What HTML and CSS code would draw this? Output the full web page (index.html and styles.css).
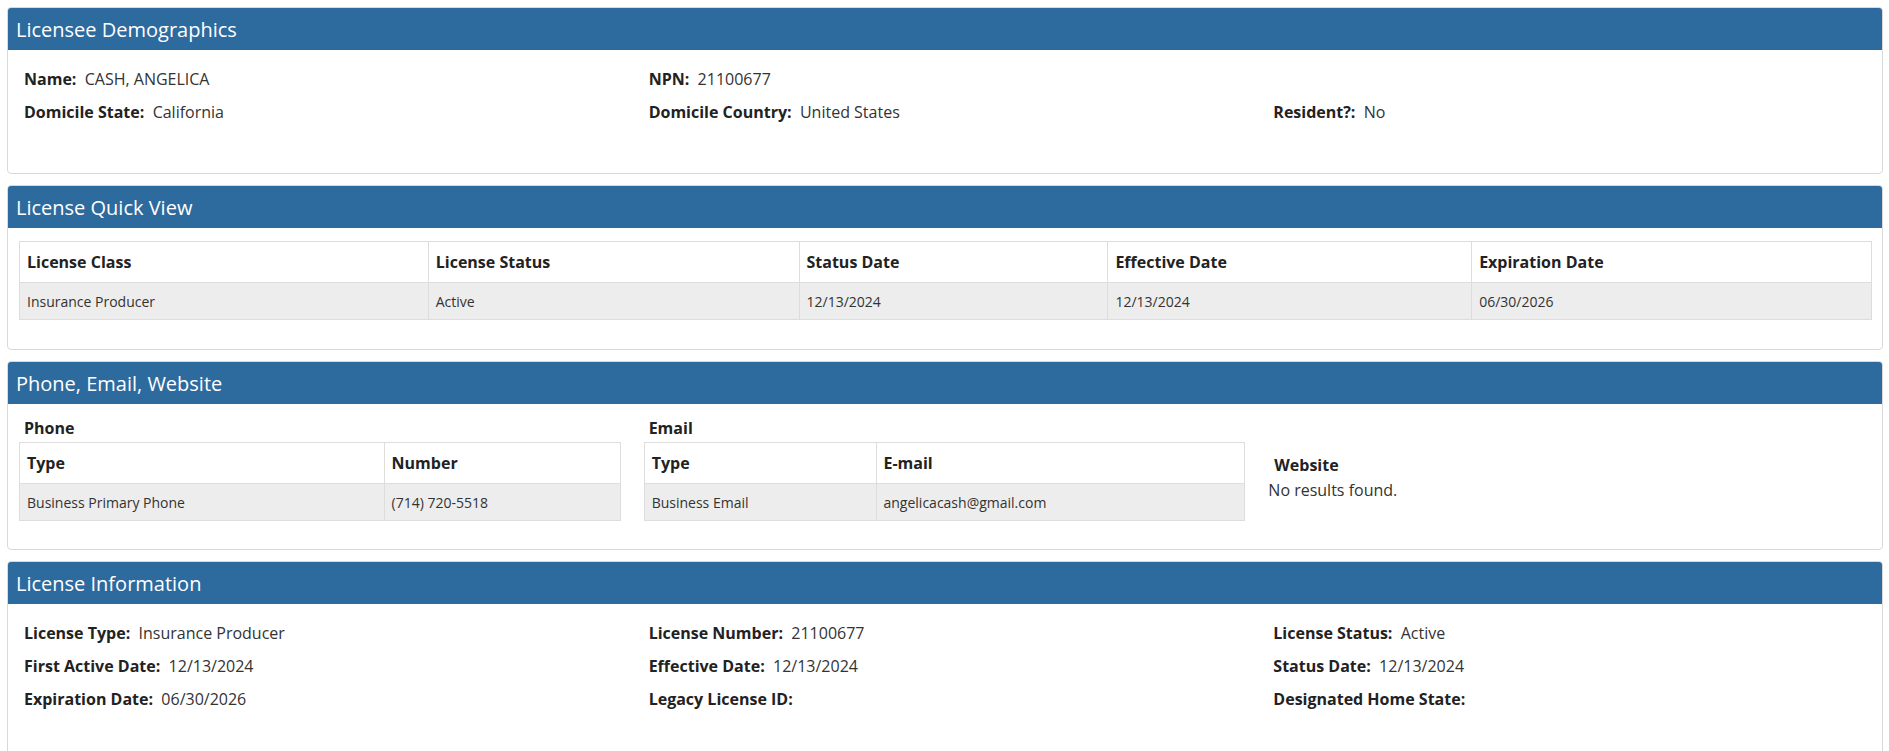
FILE: index.html
```html
<!DOCTYPE html>
<html lang="en">
<head>
<meta charset="utf-8">
<title>Licensee Details</title>
<link rel="stylesheet" href="styles.css">
</head>
<body>
<div class="page">

  <section class="panel">
    <div class="panel-heading">Licensee Demographics</div>
    <div class="panel-body fields demo">
      <div class="field"><b>Name:</b>&nbsp; CASH, ANGELICA</div>
      <div class="field"><b>NPN:</b>&nbsp; 21100677</div>
      <div class="field"></div>
      <div class="field"><b>Domicile State:</b>&nbsp; California</div>
      <div class="field"><b>Domicile Country:</b>&nbsp; United States</div>
      <div class="field"><b>Resident?:</b>&nbsp; No</div>
    </div>
  </section>

  <section class="panel">
    <div class="panel-heading">License Quick View</div>
    <div class="panel-body quick">
      <table class="grid-table">
        <colgroup>
          <col class="qc1"><col class="qc2"><col class="qc3"><col class="qc4"><col class="qc5">
        </colgroup>
        <thead>
          <tr><th>License Class</th><th>License Status</th><th>Status Date</th><th>Effective Date</th><th>Expiration Date</th></tr>
        </thead>
        <tbody>
          <tr><td>Insurance Producer</td><td>Active</td><td>12/13/2024</td><td>12/13/2024</td><td>06/30/2026</td></tr>
        </tbody>
      </table>
    </div>
  </section>

  <section class="panel">
    <div class="panel-heading">Phone, Email, Website</div>
    <div class="panel-body contact">
      <div class="contact-col">
        <div class="sub-label">Phone</div>
        <table class="grid-table">
          <colgroup><col class="pc1"><col class="pc2"></colgroup>
          <thead><tr><th>Type</th><th>Number</th></tr></thead>
          <tbody><tr><td>Business Primary Phone</td><td>(714) 720-5518</td></tr></tbody>
        </table>
      </div>
      <div class="contact-col">
        <div class="sub-label">Email</div>
        <table class="grid-table">
          <colgroup><col class="ec1"><col class="ec2"></colgroup>
          <thead><tr><th>Type</th><th>E-mail</th></tr></thead>
          <tbody><tr><td>Business Email</td><td>angelicacash@gmail.com</td></tr></tbody>
        </table>
      </div>
      <div class="contact-col website">
        <div class="sub-label">Website</div>
        <div class="no-results">No results found.</div>
      </div>
    </div>
  </section>

  <section class="panel">
    <div class="panel-heading">License Information</div>
    <div class="panel-body fields info">
      <div class="field"><b>License Type:</b>&nbsp; Insurance Producer</div>
      <div class="field"><b>License Number:</b>&nbsp; 21100677</div>
      <div class="field"><b>License Status:</b>&nbsp; Active</div>
      <div class="field"><b>First Active Date:</b>&nbsp; 12/13/2024</div>
      <div class="field"><b>Effective Date:</b>&nbsp; 12/13/2024</div>
      <div class="field"><b>Status Date:</b>&nbsp; 12/13/2024</div>
      <div class="field"><b>Expiration Date:</b>&nbsp; 06/30/2026</div>
      <div class="field"><b>Legacy License ID:</b></div>
      <div class="field"><b>Designated Home State:</b></div>
    </div>
  </section>

</div>
</body>
</html>
```
FILE: styles.css
```css
* { box-sizing: border-box; }

html, body {
  margin: 0;
  padding: 0;
  background: #ffffff;
}

body {
  font-family: "Open Sans", "Liberation Sans", sans-serif;
  font-size: 16px;
  color: #333333;
}

.page {
  padding: 7px 6px 0 7px;
}

.panel {
  border: 1px solid #d9d9d9;
  border-radius: 4px;
  background: #ffffff;
  margin-bottom: 11px;
  overflow: hidden;
}

.panel-heading {
  height: 42px;
  background: #2d6a9e;
  color: #ffffff;
  font-size: 20px;
  display: flex;
  align-items: center;
  padding: 0 8px;
}

/* field grids */
.fields {
  display: grid;
  grid-template-columns: repeat(3, 1fr);
  grid-auto-rows: 33px;
  padding-top: 18px;
}

.demo { padding-bottom: 39px; }
.info { padding-bottom: 40px; }

.field {
  padding: 0 16px;
  line-height: 22px;
  color: #333333;
  white-space: nowrap;
}

.field b {
  font-weight: 700;
  color: #222222;
}

/* tables */
.quick {
  padding: 13px 10px 29px 11px;
}

.grid-table {
  width: 100%;
  border-collapse: collapse;
  table-layout: fixed;
}

.grid-table th,
.grid-table td {
  border: 1px solid #dddddd;
  text-align: left;
  padding: 0 7px;
  white-space: nowrap;
}

.grid-table th {
  height: 41px;
  font-size: 16px;
  font-weight: 700;
  color: #222222;
  background: #ffffff;
}

.grid-table td {
  height: 37px;
  font-size: 14px;
  color: #333333;
  background: #ecedec;
}

.qc1 { width: 22.07%; }
.qc2 { width: 20.02%; }
.qc3 { width: 16.68%; }
.qc4 { width: 19.64%; }
.qc5 { width: 21.59%; }

.pc1 { width: 60.7%; }
.pc2 { width: 39.3%; }
.ec1 { width: 38.6%; }
.ec2 { width: 61.4%; }

/* contact panel */
.contact {
  display: grid;
  grid-template-columns: repeat(3, 1fr);
  padding: 14px 0 28px 0;
}

.contact-col {
  padding: 0 12px 0 11px;
}

.sub-label {
  font-weight: 700;
  color: #222222;
  line-height: 20px;
  padding-left: 5px;
  margin-bottom: 4px;
}

.website .sub-label {
  margin-top: 37px;
  margin-bottom: 0;
  padding-left: 6px;
}

.no-results {
  line-height: 20px;
  margin-top: 5px;
  color: #333333;
}
```
